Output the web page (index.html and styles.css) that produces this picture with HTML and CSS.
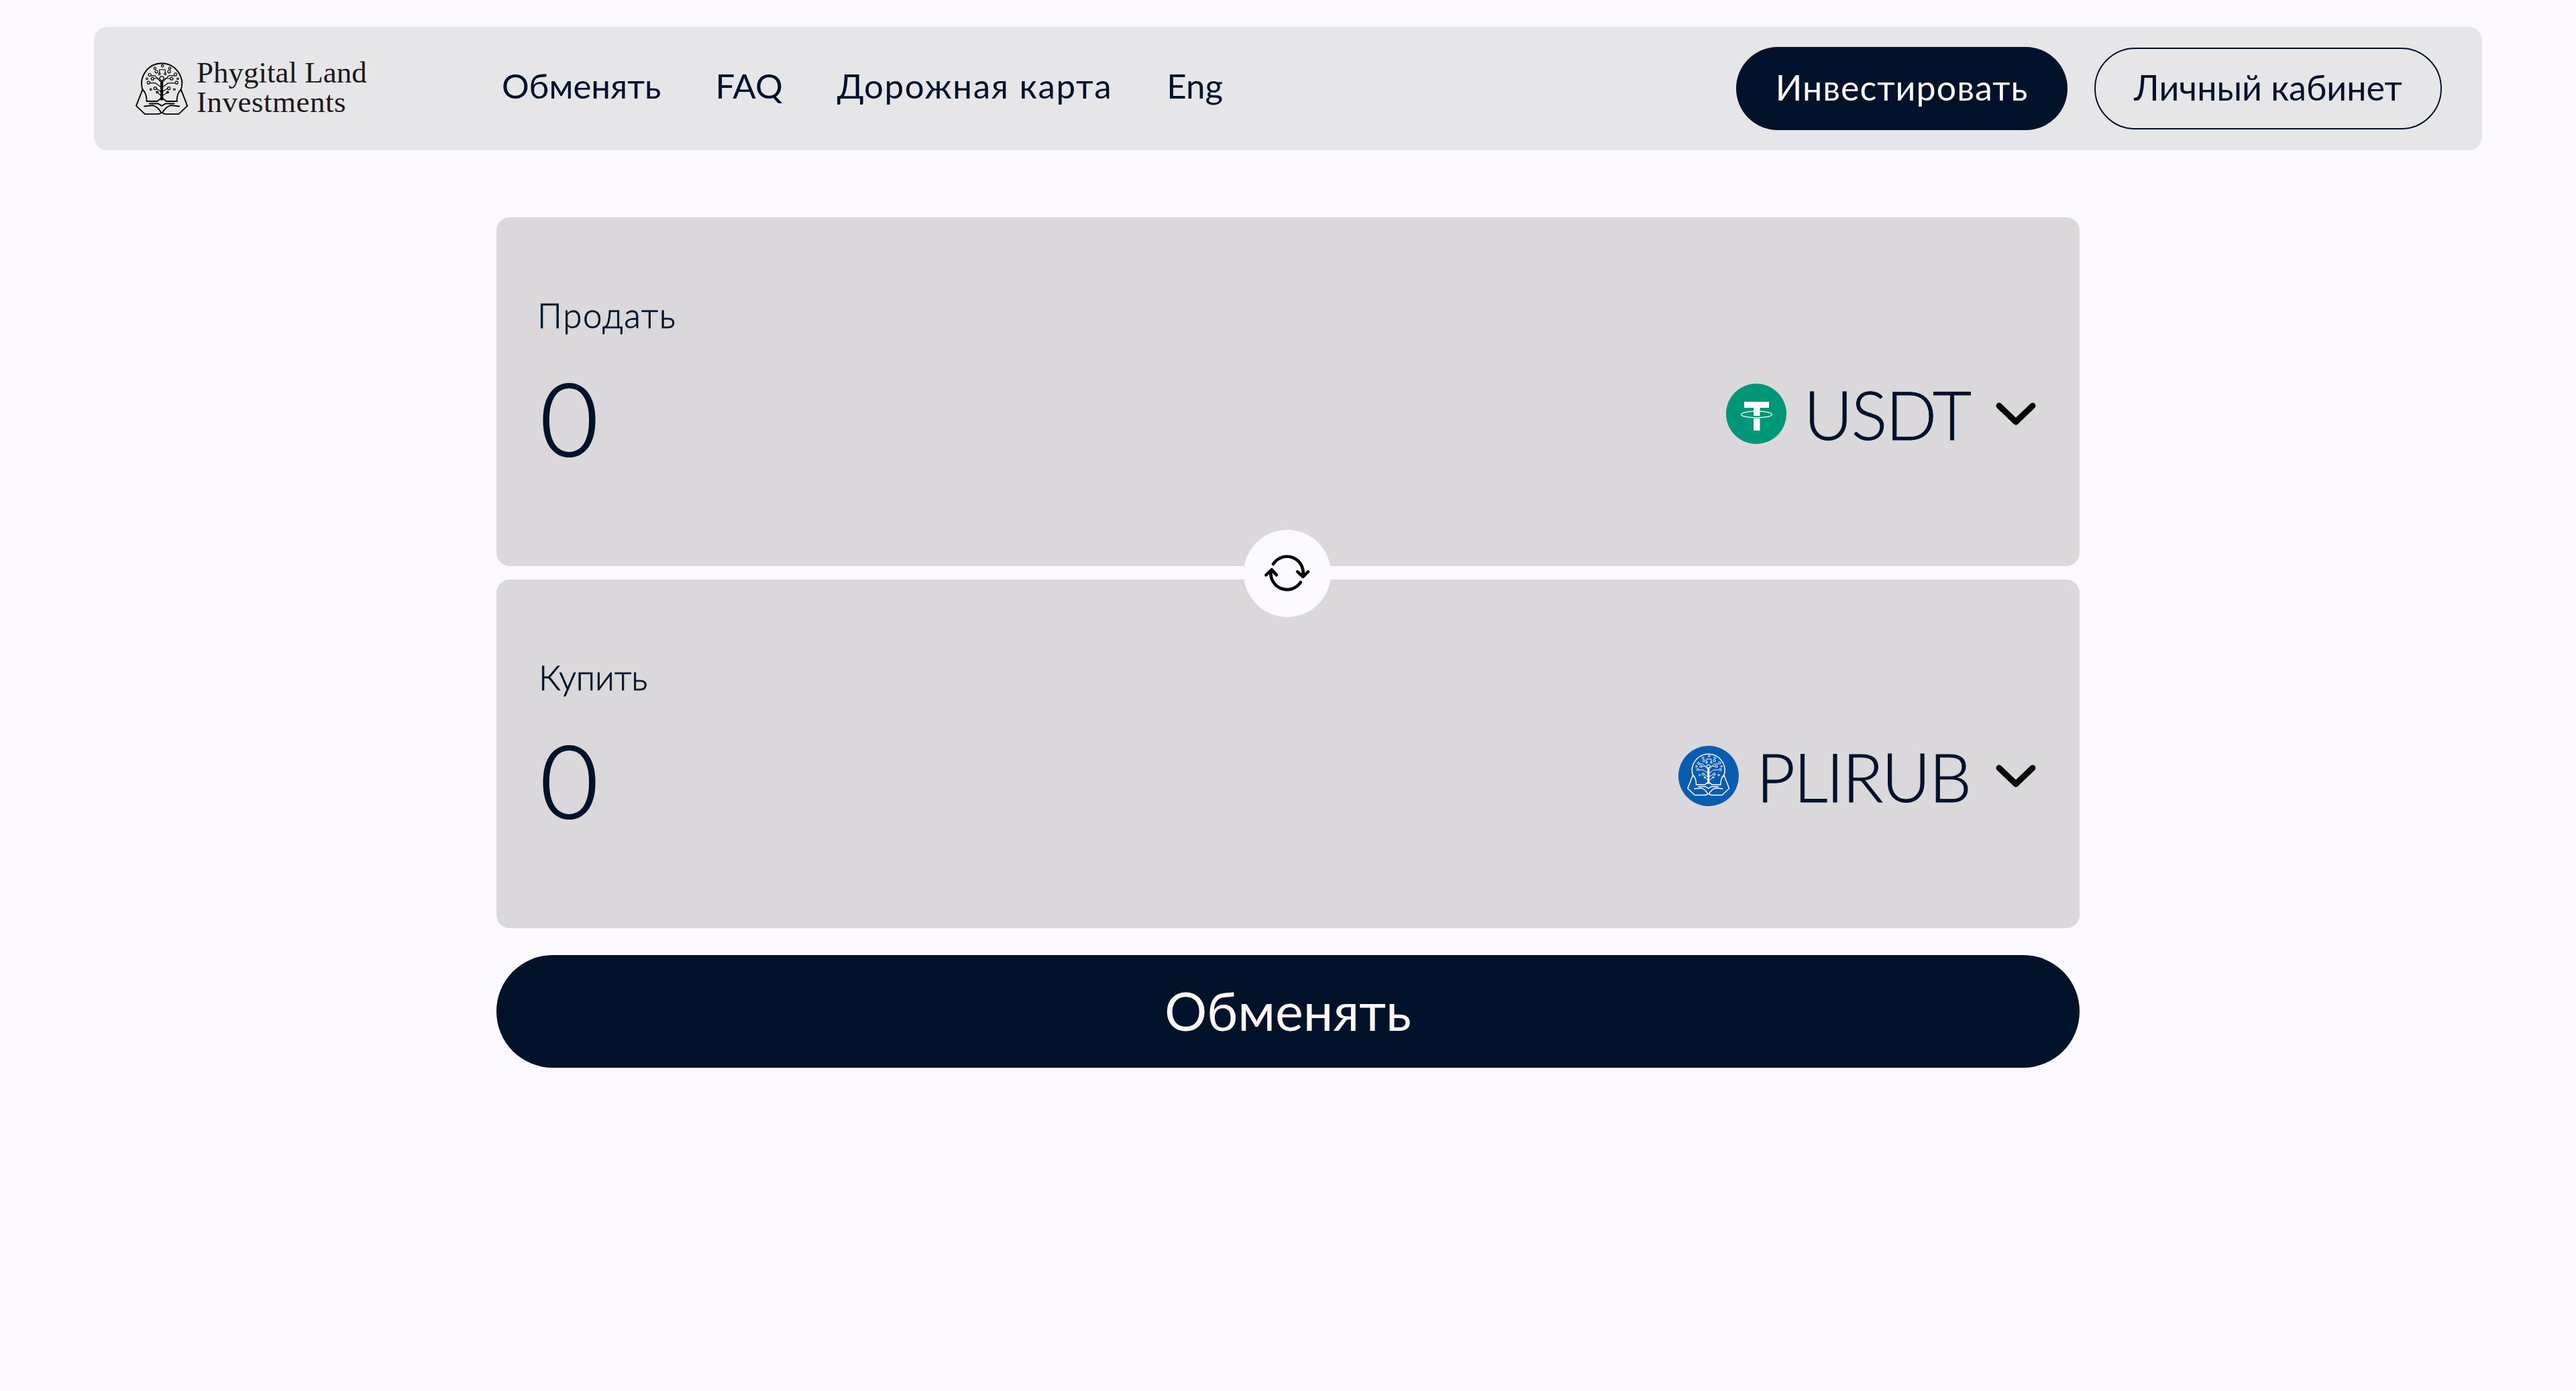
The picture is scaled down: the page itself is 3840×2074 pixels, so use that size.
FILE: index.html
```html
<!DOCTYPE html>
<html lang="ru">
<head>
<meta charset="utf-8">
<title>Phygital Land Investments</title>
<link rel="stylesheet" href="styles.css">
</head>
<body>
<svg class="defs" width="0" height="0" aria-hidden="true">
  <symbol id="pli" viewBox="35 45 232 225">
    <g fill="none" stroke="currentColor" stroke-width="5.500" stroke-linecap="round" stroke-linejoin="round">
      <path d="M68 166A88 88 0 1 1 232 166"/>
      <path d="M66 160L38 232L76 268H130Q142 268 148 262Q132 235 110 230L74 234"/>
      <path d="M66 160Q84 176 84 212"/>
      <path d="M234 160L262 232L224 268H170Q158 268 152 262Q168 235 190 230L226 234"/>
      <path d="M234 160Q216 176 216 212"/>
      <path d="M84 212H130L150 196L170 212H216"/>
      <path d="M96 222H134L150 232L166 222H204"/>
      <g stroke-width="6"><path d="M147 205V125M153 205V125"/></g>
      <g stroke-width="3.500">
        <path d="M140 88V73H165V88"/>
        <path d="M147 150L122 132H100M153 150L178 132H205"/>
        <path d="M147 170L126 155M153 170L176 155"/>
        <path d="M143 125L120 100H104M157 125L180 100H203"/>
        <path d="M136 112H115M164 112H188"/>
        <path d="M147 188L130 172M153 188L176 172"/>
      </g>
      <g stroke-width="3.500">
        <circle cx="153" cy="57" r="5"/><circle cx="120" cy="67" r="5"/><circle cx="185" cy="67" r="5"/>
        <circle cx="126" cy="82" r="6"/><circle cx="182" cy="82" r="6"/><circle cx="140" cy="92" r="4"/><circle cx="165" cy="92" r="4"/>
        <circle cx="97" cy="96" r="6"/><circle cx="210" cy="94" r="6"/><circle cx="109" cy="113" r="6"/><circle cx="193" cy="113" r="6"/>
        <circle cx="85" cy="113" r="4"/><circle cx="220" cy="113" r="4"/><circle cx="92" cy="130" r="6"/><circle cx="215" cy="130" r="6"/>
        <circle cx="121" cy="155" r="6"/><circle cx="181" cy="155" r="6"/><circle cx="102" cy="160" r="4"/><circle cx="205" cy="160" r="4"/>
        <circle cx="130" cy="172" r="4"/><circle cx="176" cy="172" r="4"/>
      </g>
      <circle cx="150" cy="112" r="9" stroke-width="4"/>
    </g>
  </symbol>
</svg>

<header class="topbar">
  <a class="brand" href="#">
    <svg class="brand-mark"><use href="#pli"/></svg>
    <span class="brand-name"><span class="brand-line">Phygital Land</span><span class="brand-line brand-line-wide">Investments</span></span>
  </a>
  <nav class="nav">
    <a href="#">Обменять</a>
    <a href="#">FAQ</a>
    <a class="nav-wide" href="#">Дорожная карта</a>
    <a href="#">Eng</a>
  </nav>
  <div class="actions">
    <a class="btn btn-solid" href="#">Инвестировать</a>
    <a class="btn btn-line" href="#">Личный кабинет</a>
  </div>
</header>

<main class="swap">
  <div class="cards">
    <section class="card">
      <div class="card-label card-label-wide">Продать</div>
      <div class="card-row">
        <div class="amount">0</div>
        <div class="token">
          <svg class="token-icon" viewBox="0 0 90 90">
            <circle cx="45" cy="45" r="45" fill="#009678"/>
            <path fill="#fff" d="M27 27H64V36H50.500V48H41V36H27ZM41 52H50.500V70H41Z"/>
            <ellipse cx="45.500" cy="46" rx="23" ry="4.800" fill="none" stroke="#fff" stroke-width="1.300"/>
          </svg>
          <span class="token-name">USDT</span>
          <svg class="chevron" viewBox="0 0 60 34"><path d="M5 5L30 29L55 5"/></svg>
        </div>
      </div>
    </section>
    <section class="card">
      <div class="card-label">Купить</div>
      <div class="card-row">
        <div class="amount">0</div>
        <div class="token">
          <span class="token-badge"><svg class="token-badge-mark"><use href="#pli"/></svg></span>
          <span class="token-name">PLIRUB</span>
          <svg class="chevron" viewBox="0 0 60 34"><path d="M5 5L30 29L55 5"/></svg>
        </div>
      </div>
    </section>
    <button class="flip" type="button" aria-label="Поменять местами">
      <svg class="flip-icon" viewBox="190 165 220 180">
        <path d="M235 213A73 73 0 0 1 369 262"/>
        <path d="M344 247L369 270L392 247"/>
        <path d="M358 295A73 73 0 0 1 225 244"/>
        <path d="M203 262L228 238L250 262"/>
      </svg>
    </button>
  </div>
  <button class="submit" type="button">Обменять</button>
</main>
</body>
</html>
```
FILE: styles.css
```css
* { box-sizing: border-box; }

html, body { margin: 0; padding: 0; }

body {
  min-height: 2074px;
  background: #fbf9fd;
  color: #01122a;
  font-family: "Lato", "Inter", "Noto Sans", sans-serif;
}

a { color: inherit; text-decoration: none; }

.defs { display: block; height: 0; }

.topbar {
  display: flex;
  align-items: center;
  height: 184px;
  margin: 40px 140px 0;
  padding: 0 60px 0 62px;
  background: #e6e5e8;
  border-radius: 20px;
}

.brand { display: flex; align-items: center; gap: 12px; width: 546px; }
.brand-mark { display: block; width: 79px; height: 79px; color: #000; }
.brand-name {
  margin-bottom: 4px;
  font-family: "Liberation Serif", serif;
  font-size: 45px;
  line-height: 44px;
  color: #1a1a1a;
}
.brand-line { display: block; }
.brand-line-wide { letter-spacing: 0.5px; }

.nav { display: flex; gap: 81px; padding-bottom: 10px; font-size: 51px; }
.nav-wide { letter-spacing: 1.700px; }

.actions { display: flex; align-items: center; gap: 40px; margin-left: auto; }

.btn {
  display: flex;
  align-items: center;
  justify-content: center;
  height: 124px;
  padding-bottom: 4px;
  border-radius: 62px;
  font-size: 52px;
}
.btn-solid { width: 494px; background: #01122a; color: #fbf7f3; letter-spacing: 1px; }
.btn-line { width: 518px; height: 122px; border: 2px solid #01122a; }

.swap { width: 2360px; margin: 100px auto 0; }

.cards { position: relative; display: flex; flex-direction: column; gap: 20px; }

.card {
  height: 520px;
  padding: 116px 65px 0 63px;
  background: #dad8db;
  border-radius: 20px;
}

.card-label { font-size: 51px; line-height: 60px; font-weight: 300; -webkit-text-stroke: 0.8px #01122a; }
.card-label-wide { margin-left: -2px; letter-spacing: 1.700px; }

.card-row {
  display: flex;
  align-items: center;
  justify-content: space-between;
  height: 160px;
  margin-top: 37px;
}

.amount { margin: 10px 0 0 2px; font-size: 150px; line-height: 160px; font-weight: 300; -webkit-text-stroke: 2px #01122a; }

.token { display: flex; align-items: center; }
.token-icon, .token-badge { width: 90px; height: 90px; flex: none; }
.token-badge {
  display: flex;
  align-items: center;
  justify-content: center;
  background: #0a5cb0;
  border-radius: 50%;
  color: #fff;
}
.token-badge-mark { display: block; width: 64px; height: 64px; margin-bottom: 4px; }
.token-name {
  margin: 0 38px 0 26px;
  font-size: 100px;
  line-height: 110px;
  font-weight: 300;
  letter-spacing: -2px;
  -webkit-text-stroke: 1px #01122a;
}

.chevron { display: block; width: 60px; height: 34px; fill: none; stroke: #050505; stroke-width: 9; stroke-linecap: round; stroke-linejoin: round; }

.flip {
  position: absolute;
  top: 466px;
  left: 50%;
  display: flex;
  align-items: center;
  justify-content: center;
  width: 130px;
  height: 130px;
  margin-left: -66px;
  padding: 0;
  border: 0;
  border-radius: 50%;
  background: #fbf9fd;
}
.flip-icon { display: block; width: 73px; height: 60px; fill: none; stroke: #050505; stroke-width: 14; stroke-linecap: round; stroke-linejoin: round; }

.submit {
  display: block;
  width: 100%;
  height: 168px;
  margin-top: 40px;
  padding: 0 0 4px;
  border: 0;
  border-radius: 84px;
  background: #01122a;
  color: #fbf7f3;
  font: inherit;
  font-size: 79px;
}
```
